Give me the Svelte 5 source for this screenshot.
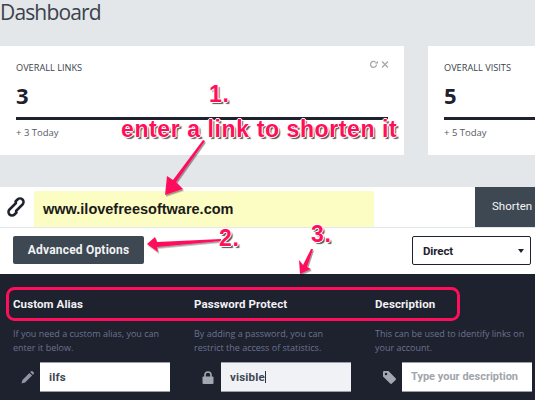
<script>
  const stats = [
    { label: 'OVERALL LINKS', value: '3', today: '+ 3 Today', tools: true },
    { label: 'OVERALL VISITS', value: '5', today: '+ 5 Today', tools: false }
  ];
  const cols = [
    { title: 'Custom Alias', help: 'If you need a custom alias, you can enter it below.', value: 'ilfs', icon: 'pen' },
    { title: 'Password Protect', help: 'By adding a password, you can restrict the access of statistics.', value: 'visible', icon: 'lock' },
    { title: 'Description', help: 'This can be used to identify links on your account.', value: '', icon: 'tag' }
  ];
</script>

<div class="page">
  <h1>Dashboard</h1>
  <div class="cards">
    {#each stats as s}
      <section class="card" class:first={s.tools}>
        {#if s.tools}
          <div class="tools">
            <svg width="20" height="9" viewBox="0 0 20 9" fill="none" stroke="#a4a8ad" stroke-width="1.3">
              <path d="M7.5 4.5a3 3 0 1 1-1-2.3" />
              <path d="M5.5 3.5h3.5V1z" fill="#a4a8ad" stroke="none" />
              <path d="M13 1.5l6 6M19 1.5l-6 6" />
            </svg>
          </div>
        {/if}
        <div class="label">{s.label}</div>
        <div class="value">{s.value}</div>
        <div class="rule"></div>
        <div class="today">{s.today}</div>
      </section>
    {/each}
  </div>

  <div class="shorten">
    <div class="logo">
      <svg width="20" height="22" viewBox="0 0 20 22" fill="none" stroke="#1e212e" stroke-width="2.5" stroke-linecap="round" stroke-linejoin="round">
        <path d="M9.5 5.5L11.5 3.5A3.5 3.5 0 0 1 16.5 8.5L10 15" />
        <path d="M10.5 16.5L8.5 18.5A3.5 3.5 0 0 1 3.5 13.5L10 7" />
      </svg>
    </div>
    <div class="url">www.ilovefreesoftware.com</div>
    <div class="go">Shorten</div>
  </div>

  <div class="options">
    <button class="adv">Advanced Options</button>
    <div class="select"><span>Direct</span><i></i></div>
  </div>

  <div class="panel">
    {#each cols as c}
      <div class="col">
        <h3>{c.title}</h3>
        <p>{c.help}</p>
        <div class="field">
          <span class="ico">
            {#if c.icon === 'pen'}
              <svg width="13" height="13" viewBox="0 0 13 13" fill="#8e95a3"><path d="M0.5 12.5l0.9-3.6 7-7 2.7 2.7-7 7zM9.2 1.1l0.9-0.8a1 1 0 0 1 1.4 0l1.2 1.2a1 1 0 0 1 0 1.4l-0.8 0.9z" /></svg>
            {:else if c.icon === 'lock'}
              <svg width="12" height="13" viewBox="0 0 12 13"><path d="M3 6V4a3 3 0 0 1 6 0v2" fill="none" stroke="#a3a7b0" stroke-width="1.6" /><rect x="0.5" y="5.5" width="11" height="7.5" rx="1" fill="#a3a7b0" /></svg>
            {:else}
              <svg width="13" height="13" viewBox="0 0 13 13" fill="#a3a7b0"><path d="M0 1.2A1.2 1.2 0 0 1 1.2 0H5.5L12.6 7.2a1.2 1.2 0 0 1 0 1.7L8.9 12.6a1.2 1.2 0 0 1-1.7 0L0 5.5zM3 4.2a1.2 1.2 0 1 0 0-2.4 1.2 1.2 0 0 0 0 2.4z" fill-rule="evenodd" /></svg>
            {/if}
          </span>
          {#if c.value === 'visible'}
            <div class="input focus">{c.value}<b></b></div>
          {:else if c.value}
            <div class="input">{c.value}</div>
          {:else}
            <div class="input ph">Type your description</div>
          {/if}
        </div>
      </div>
    {/each}
  </div>

  <div class="overlay">
    <svg width="535" height="400" viewBox="0 0 535 400">
      <defs>
        <filter id="sh" x="-30%" y="-30%" width="160%" height="160%"><feDropShadow dx="1" dy="1.5" stdDeviation="0.7" flood-color="#000" flood-opacity="0.4" /></filter>
      </defs>
      <g fill="#ff0f5b" filter="url(#sh)">
        <path d="M205 141L176 182 183 189 165 195 167 176 173 180 203 140z" />
        <path d="M221 239L157 242 155 237 147 244 158 252 157 247 221 241z" />
        <path d="M313 249L307 267 311 269 300 274 299 260 303 265 311 249z" />
      </g>
      <rect x="7.5" y="288.5" width="451" height="31" rx="7" fill="none" stroke="#ff0f5b" stroke-width="3" />
    </svg>
    <span class="note n1">1.</span>
    <span class="note n0">enter a link to shorten it</span>
    <span class="note n2">2.</span>
    <span class="note n3">3.</span>
  </div>
</div>

<style>
  :global(body) {
    margin: 0;
    background: #e4e7ea;
    overflow: hidden;
  }
  .page {
    position: relative;
    width: 535px;
    height: 400px;
    overflow: hidden;
    font-family: "Open Sans", sans-serif;
    color: #1e212e;
  }
  h1 {
    margin: 0;
    height: 46px;
    font-size: 21px;
    font-weight: 400;
    line-height: 25px;
    letter-spacing: -0.85px;
    color: #3b424b;
  }
  .cards {
    display: flex;
    gap: 24px;
    height: 109px;
  }
  .card {
    position: relative;
    box-sizing: border-box;
    width: 200px;
    flex: none;
    background: #fff;
    padding: 16px 0 0 16px;
  }
  .card.first {
    width: 404px;
    padding-right: 16px;
  }
  .tools {
    position: absolute;
    top: 14px;
    right: 15px;
    line-height: 0;
  }
  .label {
    font-size: 9.2px;
    line-height: 12px;
    color: #3b424b;
  }
  .value {
    margin-top: 7px;
    font-size: 22px;
    font-weight: 700;
    line-height: 28px;
  }
  .rule {
    height: 3px;
    margin-top: 8px;
    background: #1e212e;
  }
  .today {
    margin-top: 6px;
    font-size: 9.5px;
    line-height: 13px;
    color: #545a63;
  }
  .shorten {
    display: flex;
    box-sizing: border-box;
    height: 41px;
    margin-top: 32px;
    background: #fff;
    border-bottom: 1px solid #e4e7ea;
    align-items: stretch;
  }
  .logo {
    display: flex;
    align-items: flex-start;
    width: 34px;
    flex: none;
    padding: 9px 0 0 6px;
    box-sizing: border-box;
  }
  .url {
    box-sizing: border-box;
    width: 340px;
    flex: none;
    margin-top: 4px;
    padding-left: 9px;
    background: #fbfdc2;
    border-radius: 2px 2px 0 0;
    font-family: "Liberation Sans", sans-serif;
    font-size: 14.5px;
    font-weight: 700;
    line-height: 36px;
    color: #1a1a1a;
  }
  .go {
    margin-left: auto;
    width: 60px;
    box-sizing: border-box;
    padding-left: 17px;
    background: #3d4853;
    font-family: "Roboto", sans-serif;
    font-size: 11.5px;
    line-height: 39px;
    color: #f3f4f5;
    white-space: nowrap;
  }
  .options {
    display: flex;
    justify-content: space-between;
    align-items: flex-start;
    box-sizing: border-box;
    height: 46px;
    padding: 8px 4px 0 13px;
    background: #fff;
  }
  .adv {
    width: 131px;
    height: 28px;
    padding: 0;
    border: 0;
    border-radius: 2px;
    background: #3d4853;
    font-family: "Roboto", sans-serif;
    font-size: 12px;
    font-weight: 700;
    letter-spacing: 0.2px;
    color: #f1f3f4;
  }
  .select {
    display: flex;
    align-items: center;
    justify-content: space-between;
    box-sizing: border-box;
    width: 119px;
    height: 29px;
    padding: 0 6px 0 10px;
    background: #fff;
    border: 1.5px solid #1e212e;
    border-radius: 2px;
    font-family: "Roboto", sans-serif;
    font-size: 11.5px;
    font-weight: 700;
    letter-spacing: -0.1px;
  }
  .select i {
    border-left: 3px solid transparent;
    border-right: 3px solid transparent;
    border-top: 4.5px solid #1e212e;
  }
  .panel {
    display: grid;
    grid-template-columns: 181px 181px 1fr;
    box-sizing: border-box;
    height: 126px;
    padding: 23px 0 0 13px;
    background: #1e212e;
  }
  .col {
    min-width: 0;
  }
  h3 {
    margin: 0;
    font-family: "Roboto", sans-serif;
    font-size: 11.5px;
    font-weight: 700;
    line-height: 15px;
    letter-spacing: 0.1px;
    color: #f1f2f4;
  }
  p {
    width: 152px;
    margin: 15px 0 0;
    font-size: 9px;
    line-height: 14px;
    color: #6b7390;
  }
  .field {
    display: flex;
    align-items: center;
    margin-top: 7px;
  }
  .ico {
    display: flex;
    width: 27px;
    flex: none;
    padding-left: 8px;
    box-sizing: border-box;
  }
  .input {
    box-sizing: border-box;
    width: 130px;
    height: 30px;
    padding-left: 9px;
    background: #fff;
    border: 1px solid #9a9ea8;
    border-width: 1px 0;
    font-family: "Roboto", sans-serif;
    font-size: 11.5px;
    font-weight: 700;
    line-height: 28px;
    color: #3d4853;
    letter-spacing: 0.2px;
  }
  .focus {
    background: #f1f2f5;
    white-space: nowrap;
  }
  .focus b {
    display: inline-block;
    width: 1px;
    height: 12px;
    vertical-align: -2px;
    background: #333;
  }
  .ph {
    font-size: 11px;
    letter-spacing: 0;
    color: #a2a5ab;
    white-space: nowrap;
  }
  .overlay {
    position: absolute;
    inset: 0;
    pointer-events: none;
  }
  .overlay svg {
    position: absolute;
    inset: 0;
  }
  .note {
    position: absolute;
    font-family: "Liberation Sans", sans-serif;
    font-size: 23px;
    font-weight: 700;
    line-height: 26px;
    letter-spacing: 0.6px;
    color: #ff0f5b;
    white-space: nowrap;
    text-shadow: 1px 0 0 #fff, -1px 0 0 #fff, 0 1px 0 #fff, 0 -1px 0 #fff, 2px 2px 1px #555;
  }
  .n0 { left: 121px; top: 116px; }
  .n1 { left: 209px; top: 81px; }
  .n2 { left: 219px; top: 225px; }
  .n3 { left: 311px; top: 221px; }
</style>
